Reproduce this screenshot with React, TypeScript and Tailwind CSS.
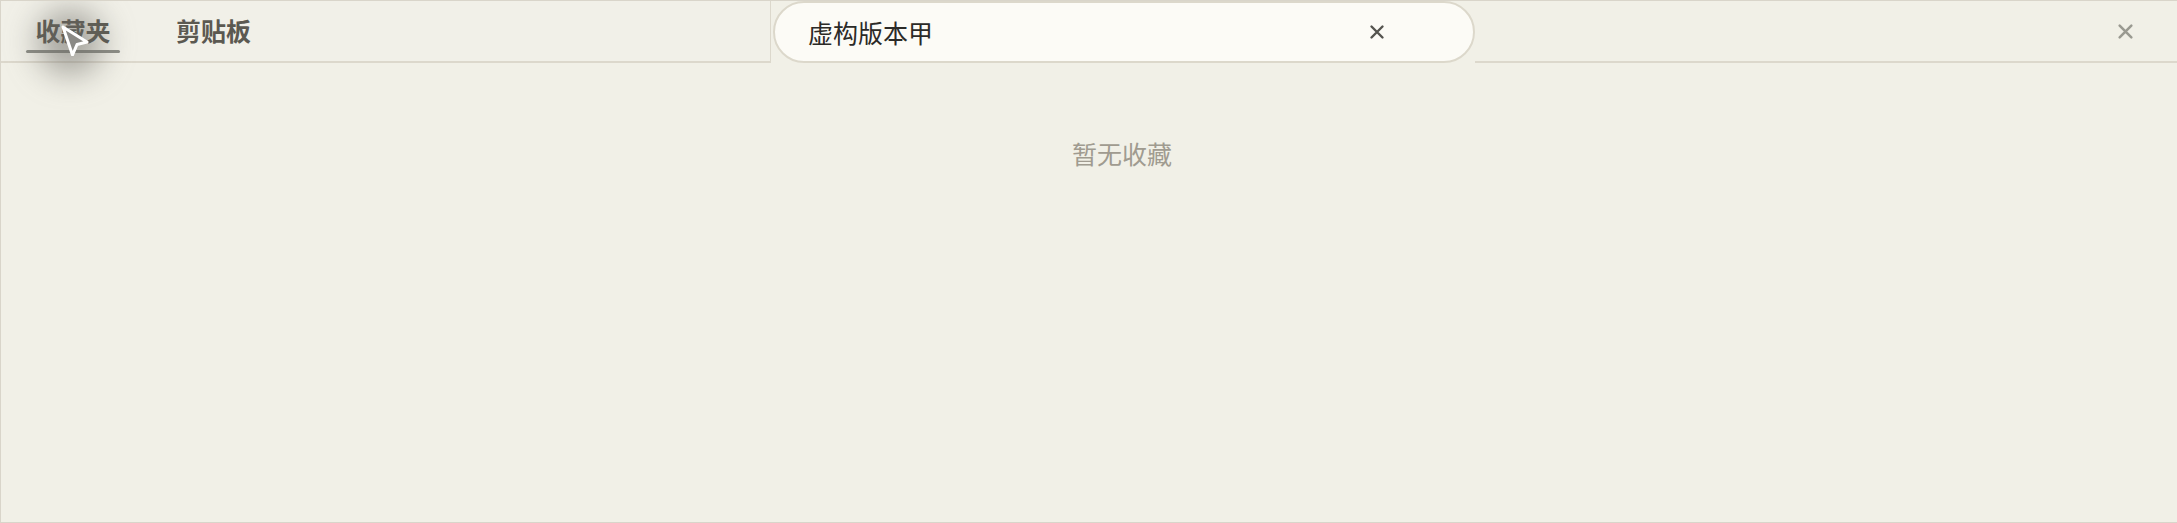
import { useState } from "react";

const font = { fontFamily: '"Noto Sans CJK SC", "Noto Sans", sans-serif' };

function CloseIcon({ className }: { className?: string }) {
  return (
    <svg viewBox="0 0 16 16" className={className} fill="none" stroke="currentColor" strokeWidth="2.4" strokeLinecap="round">
      <path d="M2.5 2.5 13.5 13.5M13.5 2.5 2.5 13.5" />
    </svg>
  );
}

function Cursor() {
  return (
    <div className="pointer-events-none absolute left-[34px] top-[4px] w-[72px] h-[72px]">
      <div className="absolute left-[2px] top-[4px] w-[66px] h-[66px] rounded-full bg-[#6a6862]/55 blur-[16px]" />
      <svg viewBox="0 0 34 34" className="absolute left-[23px] top-[17px] w-[34px] h-[34px]">
        <path d="M5 5 L29 20 L19 22.5 L14.5 33 Z" fill="#8a8985" stroke="#ffffff" strokeWidth="3" strokeLinejoin="round" />
      </svg>
    </div>
  );
}

export default function App() {
  const [tab, setTab] = useState("fav");
  const [query, setQuery] = useState("虚构版本甲");
  const tabs = [
    { id: "fav", label: "收藏夹" },
    { id: "clip", label: "剪贴板" },
  ];

  return (
    <div className="w-[2177px] h-[523px] bg-[#f1f0e7] border-l border-t border-b border-[#d9d5ca] flex flex-col overflow-hidden" style={font}>
      <div className="flex h-[62px] shrink-0">
        <div className="relative w-[770px] border-r border-b-2 border-[#dcd8cc] bg-[#f1f0e8] flex items-end pl-[25px] gap-[56px]">
          {tabs.map((t) => (
            <button
              key={t.id}
              onClick={() => setTab(t.id)}
              className={`h-full flex flex-col items-center justify-center text-[25px] font-bold text-[#5b5951] leading-none ${t.id === "fav" ? "w-[94px]" : ""}`}
            >
              <span className="mt-[9px]">{t.label}</span>
              <span className={`mt-[7px] h-[3px] w-full rounded-full ${tab === t.id ? "bg-[#8c8d86]" : "bg-transparent"}`} />
            </button>
          ))}
          <Cursor />
        </div>
        <div className="w-[702px] ml-[2px] h-[62px] rounded-full border-2 border-[#dcd8cb] bg-[#fcfbf6] flex items-center pl-[33px] pr-[88px]">
          <input
            value={query}
            onChange={(e) => setQuery(e.target.value)}
            className="flex-1 bg-transparent outline-none text-[25px] text-[#2b2a27] leading-none"
            style={font}
          />
          <button onClick={() => setQuery("")} className="text-[#55544f]">
            <CloseIcon className="w-[16px] h-[16px]" />
          </button>
        </div>
        <div className="flex-1 border-b-2 border-[#dcd8cc] flex items-center justify-end pr-[43px]">
          <button className="text-[#9a9a91]">
            <CloseIcon className="w-[17px] h-[17px]" />
          </button>
        </div>
      </div>
      <div className="flex-1 flex justify-center pl-[66px] pt-[78px]">
        <p className="text-[25px] text-[#a09b90] leading-none">暂无收藏</p>
      </div>
    </div>
  );
}
